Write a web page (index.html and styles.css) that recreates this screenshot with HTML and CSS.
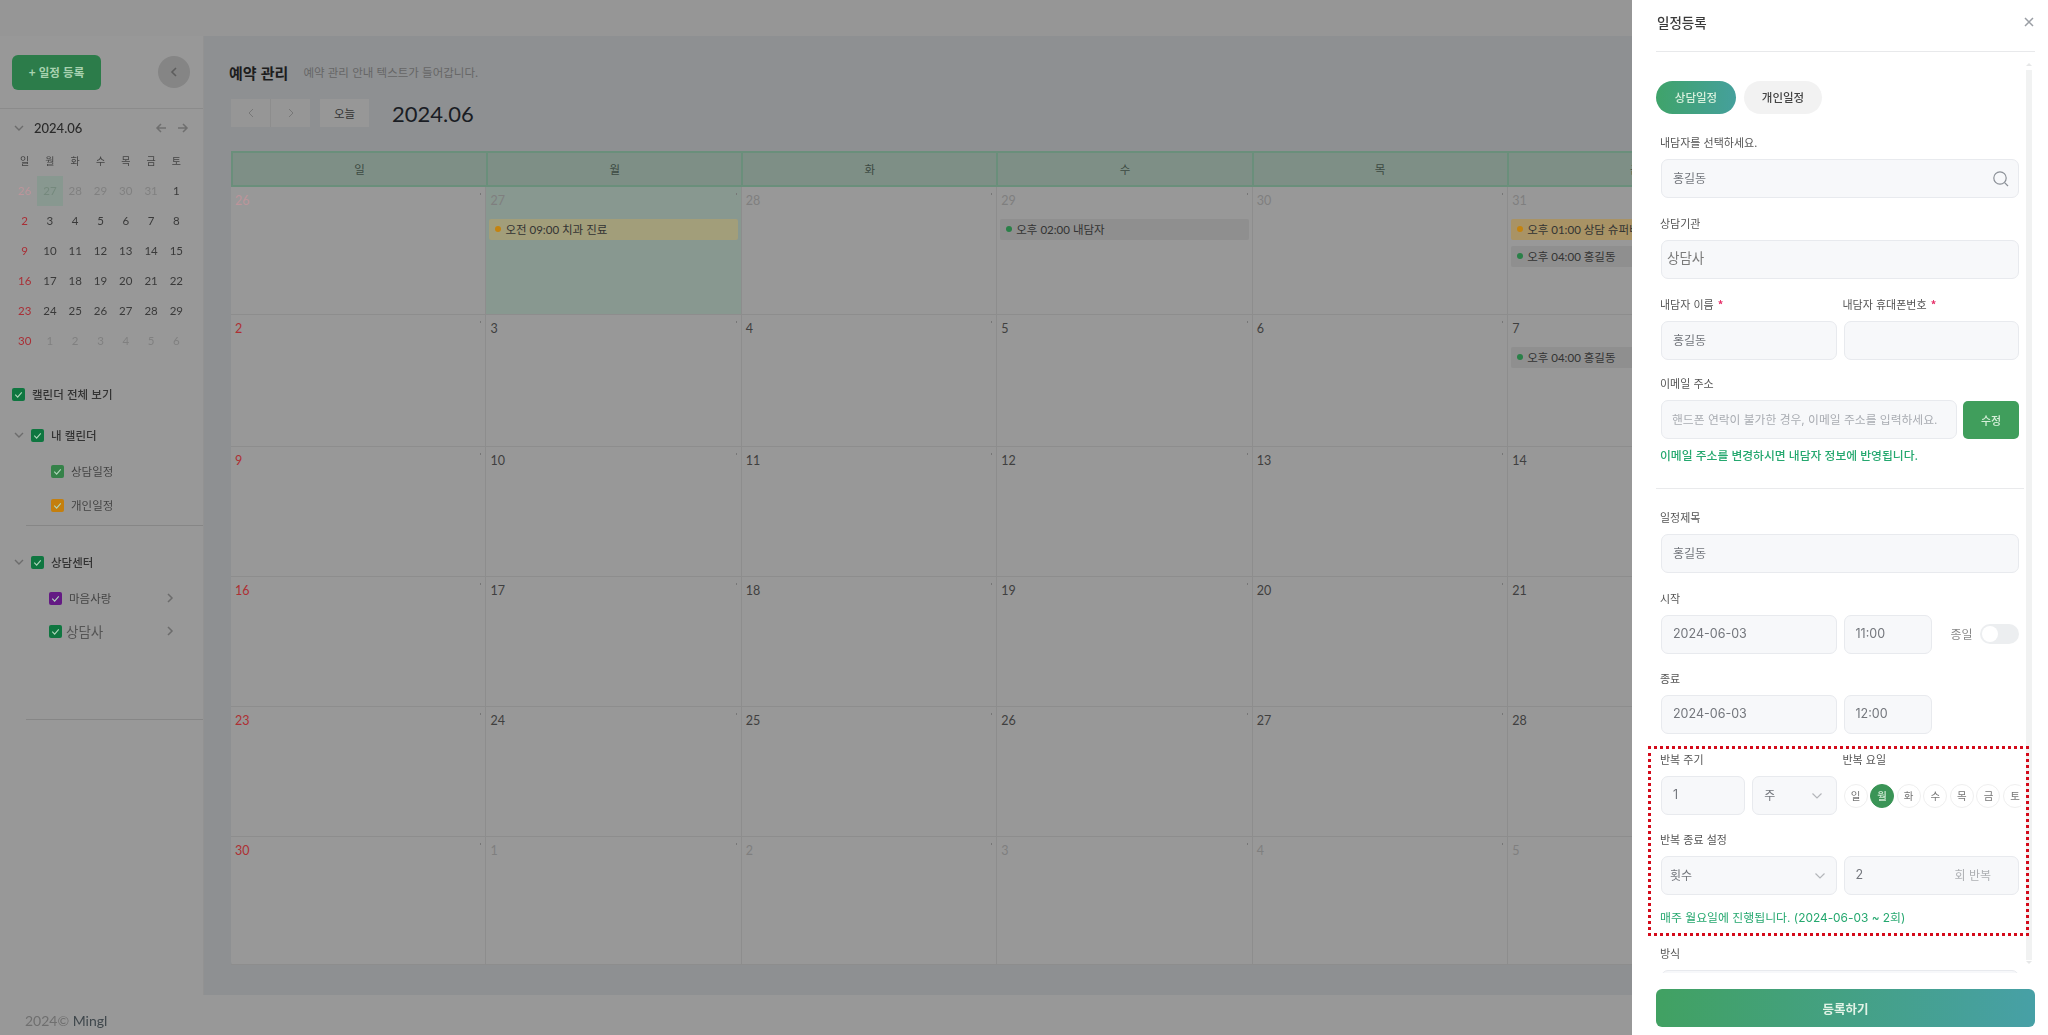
FILE: index.html
```html
<!DOCTYPE html>
<html lang="ko">
<head>
<meta charset="utf-8">
<title>예약 관리</title>
<link rel="stylesheet" href="styles.css">
</head>
<body>
<div class="app">
  <header class="topbar"></header>
  <div class="layout">
    <aside class="sidebar">
      <div class="side-top">
        <button class="add-btn">+ 일정 등록</button>
        <span class="collapse"><svg width="10" height="12" viewBox="0 0 10 12"><path d="M7 2 3 6l4 4" fill="none" stroke="#5d5d5d" stroke-width="1.6"/></svg></span>
      </div>
      <div class="mini-head">
        <svg class="ico-down" width="12" height="8" viewBox="0 0 12 8"><path d="M2 2l4 4 4-4" fill="none" stroke="#6c6c6c" stroke-width="1.4"/></svg>
        <span class="mini-title">2024.06</span>
        <svg class="mini-arrow" width="12" height="12" viewBox="0 0 12 12"><path d="M11 6H2M6 2 2 6l4 4" fill="none" stroke="#6f6f6f" stroke-width="1.5"/></svg>
        <svg class="mini-arrow" width="12" height="12" viewBox="0 0 12 12"><path d="M1 6h9M6 2l4 4-4 4" fill="none" stroke="#6f6f6f" stroke-width="1.5"/></svg>
      </div>
      <div class="mini-grid">
        <span class="wd">일</span><span class="wd">월</span><span class="wd">화</span><span class="wd">수</span><span class="wd">목</span><span class="wd">금</span><span class="wd">토</span>
        <span class="sun off">26</span><span class="off today">27</span><span class="off">28</span><span class="off">29</span><span class="off">30</span><span class="off">31</span><span>1</span>
        <span class="sun">2</span><span>3</span><span>4</span><span>5</span><span>6</span><span>7</span><span>8</span>
        <span class="sun">9</span><span>10</span><span>11</span><span>12</span><span>13</span><span>14</span><span>15</span>
        <span class="sun">16</span><span>17</span><span>18</span><span>19</span><span>20</span><span>21</span><span>22</span>
        <span class="sun">23</span><span>24</span><span>25</span><span>26</span><span>27</span><span>28</span><span>29</span>
        <span class="sun">30</span><span class="off">1</span><span class="off">2</span><span class="off">3</span><span class="off">4</span><span class="off">5</span><span class="off">6</span>
      </div>
      <div class="tree">
        <div class="row row-all"><span class="cb c-green"><svg viewBox="0 0 12 12"><path d="M3 6.2 5.2 8.4 9 4" /></svg></span><span class="t-strong">캘린더 전체 보기</span></div>
        <div class="row row-group"><svg class="ico-down" width="12" height="8" viewBox="0 0 12 8"><path d="M2 2l4 4 4-4" fill="none" stroke="#6c6c6c" stroke-width="1.4"/></svg><span class="cb c-green"><svg viewBox="0 0 12 12"><path d="M3 6.2 5.2 8.4 9 4" /></svg></span><span class="t-strong">내 캘린더</span></div>
        <div class="row row-sub row-s1"><span class="cb c-leaf"><svg viewBox="0 0 12 12"><path d="M3 6.2 5.2 8.4 9 4" /></svg></span><span class="t-sub">상담일정</span></div>
        <div class="row row-sub row-s2"><span class="cb c-orange"><svg viewBox="0 0 12 12"><path d="M3 6.2 5.2 8.4 9 4" /></svg></span><span class="t-sub">개인일정</span></div>
        <div class="tree-line line-a"></div>
        <div class="row row-group row-center"><svg class="ico-down" width="12" height="8" viewBox="0 0 12 8"><path d="M2 2l4 4 4-4" fill="none" stroke="#6c6c6c" stroke-width="1.4"/></svg><span class="cb c-green"><svg viewBox="0 0 12 12"><path d="M3 6.2 5.2 8.4 9 4" /></svg></span><span class="t-strong">상담센터</span></div>
        <div class="row row-org row-o1"><span class="cb c-purple"><svg viewBox="0 0 12 12"><path d="M3 6.2 5.2 8.4 9 4" /></svg></span><span class="t-sub">마음사랑</span><svg class="ico-right" width="8" height="12" viewBox="0 0 8 12"><path d="M2 2l4 4-4 4" fill="none" stroke="#6c6c6c" stroke-width="1.5"/></svg></div>
        <div class="row row-org row-o2"><span class="cb c-green"><svg viewBox="0 0 12 12"><path d="M3 6.2 5.2 8.4 9 4" /></svg></span><span class="t-big">상담사</span><svg class="ico-right" width="8" height="12" viewBox="0 0 8 12"><path d="M2 2l4 4-4 4" fill="none" stroke="#6c6c6c" stroke-width="1.5"/></svg></div>
        <div class="tree-line line-b"></div>
      </div>
    </aside>
    <main class="main">
      <div class="title-row"><h1>예약 관리</h1><p>예약 관리 안내 텍스트가 들어갑니다.</p></div>
      <div class="toolbar">
        <div class="nav-group">
          <span class="nav-btn"><svg width="8" height="10" viewBox="0 0 8 10"><path d="M6 1 2 5l4 4" fill="none" stroke="#777" stroke-width="1"/></svg></span>
          <span class="nav-btn"><svg width="8" height="10" viewBox="0 0 8 10"><path d="M2 1l4 4-4 4" fill="none" stroke="#777" stroke-width="1"/></svg></span>
        </div>
        <span class="today-btn">오늘</span>
        <span class="month">2024.06</span>
      </div>
      <div class="calendar">
        <div class="cal-head">
          <span>일</span><span>월</span><span>화</span><span>수</span><span>목</span><span>금</span><span>토</span>
        </div>
        <div class="cal-body">
          <div class="cell"><div class="cell-head sun off"><span>26</span><i></i></div></div>
          <div class="cell hl"><div class="cell-head off"><span>27</span><i></i></div><div class="ev ev-y"><b class="d-o"></b>오전 09:00 치과 진료</div></div>
          <div class="cell"><div class="cell-head off"><span>28</span><i></i></div></div>
          <div class="cell"><div class="cell-head off"><span>29</span><i></i></div><div class="ev"><b class="d-g"></b>오후 02:00 내담자</div></div>
          <div class="cell"><div class="cell-head off"><span>30</span><i></i></div></div>
          <div class="cell"><div class="cell-head off"><span>31</span><i></i></div><div class="ev ev-o"><b class="d-o"></b>오후 01:00 상담 슈퍼비전</div><div class="ev ev-next"><b class="d-g"></b>오후 04:00 홍길동</div></div>
          <div class="cell"><div class="cell-head"><span>1</span><i></i></div></div>

          <div class="cell"><div class="cell-head sun"><span>2</span><i></i></div></div>
          <div class="cell"><div class="cell-head"><span>3</span><i></i></div></div>
          <div class="cell"><div class="cell-head"><span>4</span><i></i></div></div>
          <div class="cell"><div class="cell-head"><span>5</span><i></i></div></div>
          <div class="cell"><div class="cell-head"><span>6</span><i></i></div></div>
          <div class="cell"><div class="cell-head"><span>7</span><i></i></div><div class="ev"><b class="d-g"></b>오후 04:00 홍길동</div></div>
          <div class="cell"><div class="cell-head"><span>8</span><i></i></div></div>

          <div class="cell"><div class="cell-head sun"><span>9</span><i></i></div></div>
          <div class="cell"><div class="cell-head"><span>10</span><i></i></div></div>
          <div class="cell"><div class="cell-head"><span>11</span><i></i></div></div>
          <div class="cell"><div class="cell-head"><span>12</span><i></i></div></div>
          <div class="cell"><div class="cell-head"><span>13</span><i></i></div></div>
          <div class="cell"><div class="cell-head"><span>14</span><i></i></div></div>
          <div class="cell"><div class="cell-head"><span>15</span><i></i></div></div>

          <div class="cell"><div class="cell-head sun"><span>16</span><i></i></div></div>
          <div class="cell"><div class="cell-head"><span>17</span><i></i></div></div>
          <div class="cell"><div class="cell-head"><span>18</span><i></i></div></div>
          <div class="cell"><div class="cell-head"><span>19</span><i></i></div></div>
          <div class="cell"><div class="cell-head"><span>20</span><i></i></div></div>
          <div class="cell"><div class="cell-head"><span>21</span><i></i></div></div>
          <div class="cell"><div class="cell-head"><span>22</span><i></i></div></div>

          <div class="cell"><div class="cell-head sun"><span>23</span><i></i></div></div>
          <div class="cell"><div class="cell-head"><span>24</span><i></i></div></div>
          <div class="cell"><div class="cell-head"><span>25</span><i></i></div></div>
          <div class="cell"><div class="cell-head"><span>26</span><i></i></div></div>
          <div class="cell"><div class="cell-head"><span>27</span><i></i></div></div>
          <div class="cell"><div class="cell-head"><span>28</span><i></i></div></div>
          <div class="cell"><div class="cell-head"><span>29</span><i></i></div></div>

          <div class="cell"><div class="cell-head sun"><span>30</span><i></i></div></div>
          <div class="cell"><div class="cell-head off"><span>1</span><i></i></div></div>
          <div class="cell"><div class="cell-head off"><span>2</span><i></i></div></div>
          <div class="cell"><div class="cell-head off"><span>3</span><i></i></div></div>
          <div class="cell"><div class="cell-head off"><span>4</span><i></i></div></div>
          <div class="cell"><div class="cell-head off"><span>5</span><i></i></div></div>
          <div class="cell"><div class="cell-head off"><span>6</span><i></i></div></div>
        </div>
      </div>
    </main>
  </div>
  <footer class="footer"><span class="yr">2024©</span> <span class="brand">Mingl</span></footer>
</div>

<aside class="drawer">
  <div class="drawer-head">
    <h2>일정등록</h2>
    <svg width="10" height="10" viewBox="0 0 10 10"><path d="M1 1l8 8M9 1 1 9" fill="none" stroke="#9a9ea4" stroke-width="1.5"/></svg>
  </div>
  <div class="drawer-body">
    <form class="form">
      <div class="tabs"><span class="tab on">상담일정</span><span class="tab">개인일정</span></div>
      <div class="field">
        <label>내담자를 선택하세요.</label>
        <div class="input pad-11"><span>홍길동</span><svg class="search" width="18" height="18" viewBox="0 0 18 18"><circle cx="8" cy="8" r="6.2" fill="none" stroke="#8b9097" stroke-width="1.2"/><path d="M12.6 12.6 16 16" stroke="#8b9097" stroke-width="1.2"/></svg></div>
      </div>
      <div class="field">
        <label>상담기관</label>
        <div class="input pad-5 big"><span>상담사</span></div>
      </div>
      <div class="split">
        <div class="field"><label>내담자 이름 <em>*</em></label><div class="input pad-11"><span>홍길동</span></div></div>
        <div class="field"><label>내담자 휴대폰번호 <em>*</em></label><div class="input"></div></div>
      </div>
      <div class="field field-email">
        <label>이메일 주소</label>
        <div class="email-row">
          <div class="input pad-11 ph"><span>핸드폰 연락이 불가한 경우, 이메일 주소를 입력하세요.</span></div>
          <button type="button" class="edit-btn">수정</button>
        </div>
        <p class="hint hint-bold">이메일 주소를 변경하시면 내담자 정보에 반영됩니다.</p>
      </div>
      <hr class="sep">
      <div class="field field-title">
        <label>일정제목</label>
        <div class="input pad-11"><span>홍길동</span></div>
      </div>
      <div class="field field-start">
        <label>시작</label>
        <div class="split">
          <div class="input pad-11 num"><span>2024-06-03</span></div>
          <div class="time-row">
            <div class="input pad-11 num time"><span>11:00</span></div>
            <span class="allday">종일</span>
            <span class="toggle"><i></i></span>
          </div>
        </div>
      </div>
      <div class="field field-end">
        <label>종료</label>
        <div class="split">
          <div class="input pad-11 num"><span>2024-06-03</span></div>
          <div class="time-row"><div class="input pad-11 num time"><span>12:00</span></div></div>
        </div>
      </div>
      <div class="split field-repeat">
        <div class="field">
          <label>반복 주기</label>
          <div class="split tight">
            <div class="input pad-11 num"><span>1</span></div>
            <div class="input pad-11 sel"><span>주</span><svg width="12" height="8" viewBox="0 0 12 8"><path d="M1.5 1.5 6 6l4.5-4.5" fill="none" stroke="#b4b6ba" stroke-width="1.2"/></svg></div>
          </div>
        </div>
        <div class="field">
          <label>반복 요일</label>
          <div class="days"><span>일</span><span class="on">월</span><span>화</span><span>수</span><span>목</span><span>금</span><span>토</span></div>
        </div>
      </div>
      <div class="split field-until">
        <div class="field"><label>반복 종료 설정</label><div class="input pad-9 sel"><span>횟수</span><svg width="12" height="8" viewBox="0 0 12 8"><path d="M1.5 1.5 6 6l4.5-4.5" fill="none" stroke="#b4b6ba" stroke-width="1.2"/></svg></div></div>
        <div class="field"><label class="blank">&nbsp;</label><div class="input pad-11 num count"><span>2</span><span class="unit">회 반복</span></div></div>
      </div>
      <p class="hint hint-repeat">매주 월요일에 진행됩니다. (2024-06-03 ~ 2회)</p>
      <div class="field field-way">
        <label>방식</label>
        <div class="input"></div>
      </div>
    </form>
    <div class="scrollbar"></div>
  </div>
  <div class="drawer-foot"><button type="button" class="submit">등록하기</button></div>
  <div class="mark"></div>
</aside>
</body>
</html>
```
FILE: styles.css
```css
* { box-sizing: border-box; }
html, body { margin: 0; height: 100%; overflow: hidden; }
body { background: #989898; font-family: "Lato", "Noto Sans CJK KR", sans-serif; color: #333; font-size: 12px; }
h1, h2, p { margin: 0; font-weight: 500; }

.app { height: 1035px; display: flex; flex-direction: column; filter: blur(0.5px); }
.topbar { height: 36px; background: #969696; flex: none; }
.layout { flex: 1; display: flex; min-height: 0; }
.footer { height: 40px; flex: none; padding: 16px 0 0 25px; font-size: 14px; line-height: 20px; }
.yr { color: #6f6f6f; }
.brand { color: #3f474c; }

.sidebar { width: 204px; flex: none; border-right: 1px solid #929292; overflow: hidden; }
.side-top { height: 73px; padding-left: 12px; padding-right: 13px; display: flex; align-items: center; justify-content: space-between; border-bottom: 1px solid #8b8b8b; }
.add-btn { width: 89px; height: 35px; border: 0; border-radius: 6px; background: #2c7c4a; color: #a8d2b0; font: 700 11.5px "Noto Sans CJK KR", sans-serif; }
.collapse { width: 32px; height: 32px; border-radius: 50%; background: #858585; display: flex; align-items: center; justify-content: center; }

.mini-head { height: 37px; padding: 0 14px 0 13px; display: flex; align-items: center; }
.mini-title { margin-left: 9px; flex: 1; font-size: 13px; font-weight: 500; color: #2a2a2a; }
.mini-arrow { margin-left: 10px; }
.mini-grid { margin-left: 12px; width: 177px; display: grid; grid-template-columns: repeat(7, 1fr); grid-auto-rows: 30px; font-size: 11.5px; text-align: center; line-height: 30px; color: #3a3a3a; }
.wd { font-size: 10px; color: #444; }
.mini-grid .off { color: #808080; }
.mini-grid .sun { color: #a92f36; }
.mini-grid .sun.off { color: #bc959b; }
.mini-grid .today { background: #889890; color: #75897d; }

.tree { margin-top: 25px; }
.row { height: 26px; display: flex; align-items: center; }
.cb { width: 13px; height: 13px; border-radius: 2px; flex: none; display: block; }
.cb svg { display: block; fill: none; stroke: #b0d8bc; stroke-width: 1; }
.c-green { background: #0f7640; }
.c-leaf { background: #358249; }
.c-orange { background: #c47f0e; }
.c-purple { background: #641a84; }
.t-strong { font: 500 11.5px "Noto Sans CJK KR", sans-serif; color: #333; }
.t-sub { font: 400 11.5px "Noto Sans CJK KR", sans-serif; color: #444; }
.t-big { font: 400 13.5px "Noto Sans CJK KR", sans-serif; color: #555; margin-left: -3px; }
.row-all { padding-left: 12px; gap: 7px; }
.row-group { padding-left: 13px; margin-top: 15px; }
.row-group .cb { margin-left: 6px; }
.row-group .t-strong { margin-left: 7px; }
.row-sub { padding-left: 51px; gap: 7px; margin-top: 8px; }
.row-s1 { margin-top: 10px; }
.tree-line { border-top: 1px solid #868686; margin-left: 26px; }
.line-a { margin-top: 7px; }
.row-center { margin-top: 23px; }
.row-org { padding-left: 49px; gap: 7px; }
.row-o1 { margin-top: 10px; }
.row-o2 { margin-top: 7px; }
.ico-right { margin-left: auto; margin-right: 29px; }
.line-b { margin-top: 75px; }

.main { flex: 1; min-width: 0; background: #8e9092; padding: 24px 29px 30px 27px; display: flex; flex-direction: column; }
.title-row { height: 24px; display: flex; align-items: center; gap: 15px; margin-left: -2px; }
.title-row h1 { font: 700 15px "Noto Sans CJK KR", sans-serif; color: #1d1d1d; }
.title-row p { font: 400 11.5px "Noto Sans CJK KR", sans-serif; color: #666; }
.toolbar { margin-top: 15px; height: 28px; display: flex; align-items: center; flex: none; }
.nav-group { display: flex; gap: 1px; background: #8d8d8d; }
.nav-btn { width: 39px; height: 28px; background: #969696; display: flex; align-items: center; justify-content: center; }
.today-btn { margin-left: 10px; width: 49px; height: 28px; background: #979797; color: #333; font: 400 11.5px/28px "Noto Sans CJK KR", sans-serif; text-align: center; }
.month { margin-left: 23px; font-size: 22px; color: #1a1d24; }

.calendar { margin-top: 24px; flex: 1; display: flex; flex-direction: column; background: #989898; border-radius: 0 0 4px 4px; }
.cal-head { height: 36px; flex: none; display: grid; grid-template-columns: repeat(7, 1fr); background: #7e8f86; border: 2px solid #6a8f7b; border-right-width: 0; }
.cal-head span { line-height: 32px; color: #3c4a42; font: 400 11.5px/32px "Noto Sans CJK KR", sans-serif; text-align: center; border-right: 2px solid #6a8f7b; }
.cal-body { flex: 1; display: grid; grid-template-columns: repeat(7, 1fr); grid-template-rows: 128px 132px 130px 130px 130px 128px; }
.cell { border-right: 1px solid #8d8d8d; border-bottom: 1px solid #8d8d8d; padding: 5px 3px 0; min-width: 0; overflow: hidden; }
.cell.hl { background: #889890; }
.cell-head { height: 18px; display: flex; justify-content: space-between; padding-left: 1px; font-size: 12.5px; line-height: 18px; color: #3f3f3f; }
.cell-head i { width: 1px; height: 2px; background: #777; margin: 1px 1px 0 0; }
.cell-head.off { color: #7f7f7f; }
.cell-head.sun { color: #ae2f33; }
.cell-head.sun.off { color: #bc959b; }
.ev { margin-top: 9px; height: 21px; padding-bottom: 1px; border-radius: 2px; background: #8f8f8f; padding-left: 6px; display: flex; align-items: center; gap: 4px; white-space: nowrap; overflow: hidden; font: 400 11.5px "Lato", "Noto Sans CJK KR", sans-serif; color: #333; }
.ev b { width: 6px; height: 6px; border-radius: 50%; flex: none; }
.d-o { background: #c4830f; }
.d-g { background: #2a8048; }
.ev-y { background: #a29e7a; }
.ev-o { background: #a99365; }
.ev-next { margin-top: 6px; }

.drawer { position: fixed; top: 0; right: 0; bottom: 0; width: 416px; background: #fff; padding: 0 13px 0 24px; display: flex; flex-direction: column; font-family: "Inter", "Noto Sans CJK KR", sans-serif; filter: blur(0.35px); }
.drawer-head { height: 52px; flex: none; padding: 0 1px 8px 1px; border-bottom: 1px solid #e8e9eb; display: flex; align-items: center; justify-content: space-between; }
.drawer-head h2 { font: 500 13.5px "Noto Sans CJK KR", sans-serif; color: #3a3a3a; }
.drawer-body { height: 921px; flex: none; display: flex; overflow: hidden; }
.form { width: 368px; flex: none; padding-top: 29px; }
.scrollbar { position: relative; margin: 18px 0 13px 2px; width: 6px; background: #f1f2f2; }
.scrollbar::before, .scrollbar::after { content: ""; position: absolute; left: 0; border: 3px solid transparent; }
.scrollbar::before { top: -10px; border-bottom-color: #e6e7e8; }
.scrollbar::after { bottom: -7px; border-top-color: #e6e7e8; }
.tabs { display: flex; gap: 8px; height: 33px; margin-bottom: 20px; }
.tab { width: 78px; border-radius: 17px; background: #f2f2f2; color: #444; font: 500 11.5px/32px "Noto Sans CJK KR", sans-serif; text-align: center; }
.tab.on { width: 80px; background: linear-gradient(90deg, #3fa36a, #45a09c); color: #d8f0dc; }

.field { margin: 0 5px 17px; }
.field label { display: block; height: 16px; margin: 0 0 9px -1px; font: 400 11px/16px "Noto Sans CJK KR", sans-serif; color: #555; white-space: nowrap; }
.field label em { font-style: normal; font-weight: 700; color: #e6336b; margin-left: 1px; }
.input { height: 39px; border: 1px solid #e8eaee; border-radius: 7px; background: #f7f8fa; display: flex; align-items: center; color: #74777d; font-size: 12px; white-space: nowrap; min-width: 0; overflow: hidden; }
.input > span { margin-bottom: 3px; }
.pad-11 { padding: 0 11px; }
.pad-9 { padding: 0 8px; }
.pad-5 { padding: 0 5px; }
.big { font-size: 13.5px; color: #7b7b7b; }
.big > span { margin-bottom: 5px; }
.num { font-size: 12.5px; }
.ph { flex: 1; color: #a9acb2; font-size: 11.8px; padding-left: 10px; }
.search { margin-left: auto; margin-right: -3px; }
.split { display: grid; grid-template-columns: 1fr 1fr; gap: 7px; }
.form > .split { margin: 0 5px; }
.form > .split > .field { margin: 0 0 17px; min-width: 0; }
.split.tight { gap: 7px; }
.email-row { display: flex; gap: 6px; }
.edit-btn { width: 56px; height: 38px; margin-top: 1px; border: 0; border-radius: 5px; background: #409e5c; color: #d6efd9; font: 500 11px "Noto Sans CJK KR", sans-serif; flex: none; }
.hint { color: #25a86f; font: 400 11.9px/16px "Inter", "Noto Sans CJK KR", sans-serif; margin-left: -1px; white-space: nowrap; }
.hint-bold { margin-top: 9px; font-weight: 500; font-size: 11.8px; }
.field-email { margin-top: -2px; margin-bottom: 0; }
.sep { margin: 24px 0 0; border: 0; border-top: 1px solid #e9eaec; }
.field-title { margin-top: 20px; margin-bottom: 17px; }
.field-start { margin-bottom: 16px; }
.field-end { margin-bottom: 17px; }
.time-row { display: flex; align-items: center; min-width: 0; }
.time { width: 88px; flex: none; }
.allday { margin-left: 19px; margin-bottom: 2px; flex: none; white-space: nowrap; font: 400 12px "Noto Sans CJK KR", sans-serif; color: #888; }
.toggle { margin-left: 7px; margin-bottom: 1px; width: 39px; height: 20px; flex: none; border-radius: 10px; background: #eceef0; display: block; padding: 2px; }
.toggle i { display: block; width: 16px; height: 16px; border-radius: 50%; background: #fff; }
.sel { justify-content: space-between; }
.sel svg { flex: none; margin-right: 2px; }
.days { display: flex; gap: 2.6px; height: 39px; align-items: center; width: 177px; overflow: hidden; }
.days span { width: 24px; height: 24px; flex: none; border: 1px solid #efefef; border-radius: 50%; text-align: center; font: 400 10.5px/22px "Noto Sans CJK KR", sans-serif; color: #777; }
.days .on { background: #3a9456; border-color: #3a9456; color: #cfe9d3; font-weight: 500; }
.form > .field-repeat > .field { margin-bottom: 16px; }
.form > .field-until > .field { margin-bottom: 15px; }
.count .unit { margin-left: auto; margin-right: 16px; color: #aeb0b4; font: 400 12px "Noto Sans CJK KR", sans-serif; }
.hint-repeat { margin-left: 4px; }
.field-way { margin-top: 19px; margin-bottom: 0; }

.drawer-foot { flex: none; padding-top: 16px; }
.submit { width: 379px; height: 38px; border: 0; border-radius: 6px; background: linear-gradient(90deg, #41a162, #47a0a6); color: #e2f3e6; font: 700 12.5px "Noto Sans CJK KR", sans-serif; display: block; }
.mark { position: absolute; left: 16px; top: 746px; width: 381px; height: 190px; border: 3px dotted #d40a1a; }
.ico-down { flex: none; }
```
